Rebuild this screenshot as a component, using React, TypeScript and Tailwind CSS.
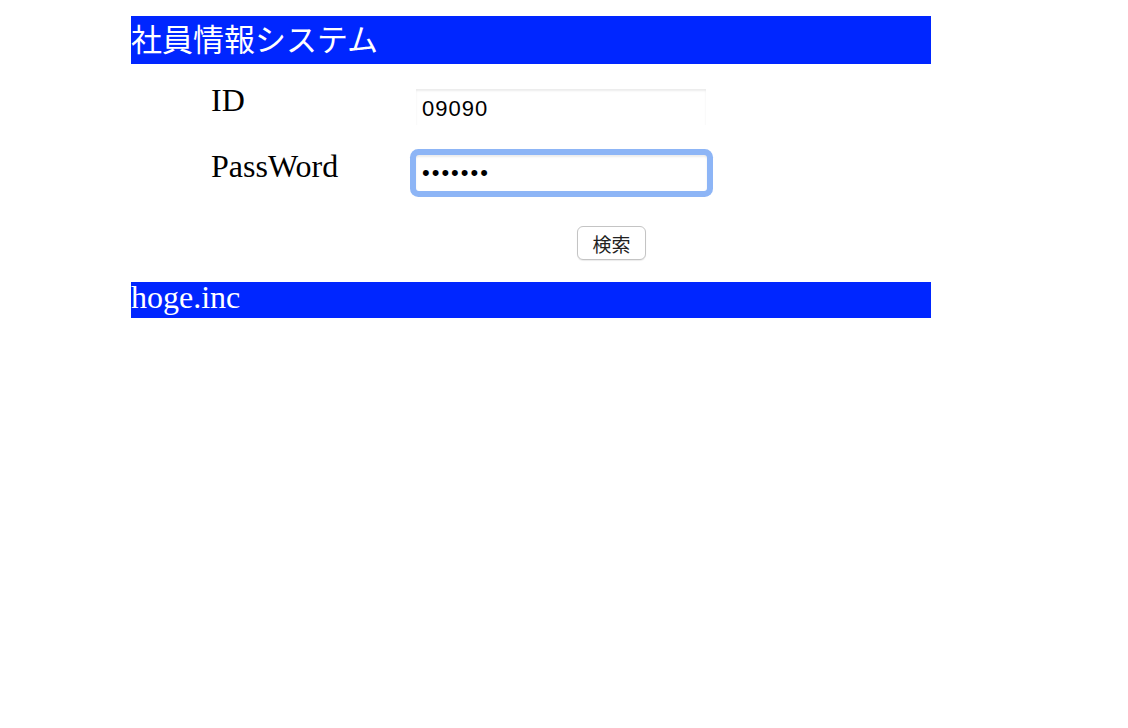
const serif = "font-['Liberation_Serif','Noto_Sans_CJK_JP',serif]";

const App = () => {
  return (
    <div className="min-h-[728px] w-full bg-white">
      <div className="ml-[131px] w-[800px] pt-[16px]">
        <header className="flex h-[48px] items-center bg-[#0026ff]">
          <h1 className={`${serif} text-[31px] leading-[37px] text-white`}>
            社員情報システム
          </h1>
        </header>

        <div className="flex flex-col pl-[80px] pt-[16px]">
          <div className="flex items-start">
            <label className={`${serif} w-[205px] pt-[2px] text-[32px] leading-[37px] text-black`}>ID</label>
            <input
              type="text"
              defaultValue="09090"
              className="mt-[9px] h-[36px] w-[290px] bg-white px-[6px] pt-[3px] font-['Liberation_Sans',sans-serif] text-[22px] tracking-[1px] text-black shadow-[inset_0_2px_2px_rgba(0,0,0,0.08)] outline-none"
            />
          </div>
          <div className="mt-[23px] flex items-start">
            <label className={`${serif} w-[205px] text-[32px] leading-[37px] text-black`}>PassWord</label>
            <input
              type="password"
              defaultValue="hogehog"
              className="mt-[7px] h-[36px] w-[291px] rounded-[3px] bg-white px-[6px] font-['Liberation_Sans',sans-serif] text-[22px] tracking-[2px] text-black shadow-[0_0_0_6px_#8db5f6,inset_0_2px_2px_rgba(0,0,0,0.08)] outline-none"
            />
          </div>
          <div className="mt-[35px] flex pl-[366px]">
            <button className="h-[34px] w-[69px] rounded-[6px] border border-[#c4c4c4] bg-white font-['Noto_Sans_CJK_JP',sans-serif] text-[19px] leading-none text-[#222] shadow-[0_1px_1px_rgba(0,0,0,0.08)]">
              検索
            </button>
          </div>
        </div>

        <footer className="mt-[22px] flex h-[36px] items-start bg-[#0026ff]">
          <span className={`${serif} text-[32px] leading-[30px] text-white`}>hoge.inc</span>
        </footer>
      </div>
    </div>
  );
};

export default App;
